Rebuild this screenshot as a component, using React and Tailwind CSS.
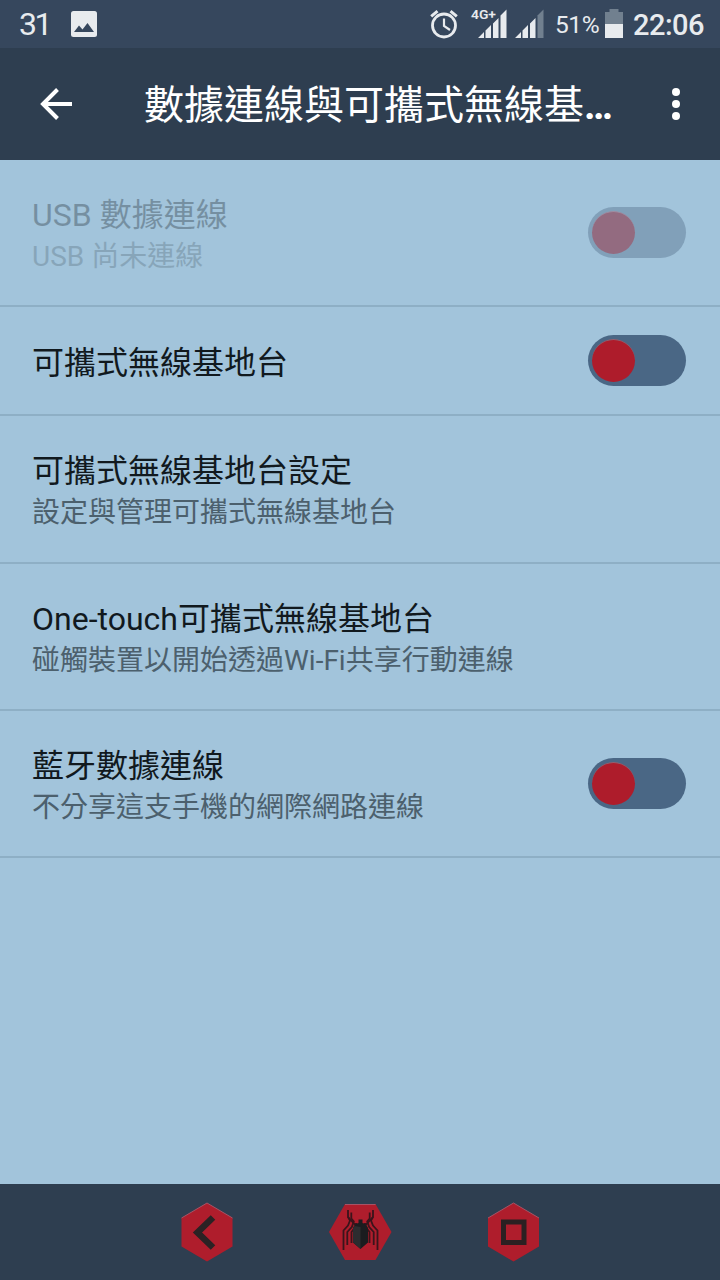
import React from 'react';

const rows = [
    { title: 'USB 數據連線', summary: 'USB 尚未連線', height: 'h-[147px]', hasSwitch: true, disabled: true },
    { title: '可攜式無線基地台', height: 'h-[109px]', hasSwitch: true },
    { title: '可攜式無線基地台設定', summary: '設定與管理可攜式無線基地台', height: 'h-[148px]' },
    { title: 'One-touch可攜式無線基地台', summary: '碰觸裝置以開始透過Wi-Fi共享行動連線', height: 'h-[147px]' },
    { title: '藍牙數據連線', summary: '不分享這支手機的網際網路連線', height: 'h-[147px]', hasSwitch: true },
];

function StatusBar() {
    return (
        <div className="h-12 bg-[#36475d] flex items-center text-[#e8ebee]">
            <span className="ml-[19px] w-[51px] text-[32px] leading-none font-normal tracking-[-2.5px]">31</span>
            <svg className="w-[28px] h-[28px]" viewBox="0 0 28 28">
                <rect x="1" y="1" width="26" height="26" rx="2.5" fill="#e8ebee" />
                <path d="M4 22l5-6.500 3.500 4 5-6.500L24 22z" fill="#36475d" />
            </svg>
            <svg className="ml-[332px] w-[28px] h-[32px]" viewBox="0 0 28 32" fill="none" stroke="#e8ebee">
                <circle cx="14" cy="17.5" r="11.5" strokeWidth="2.8" />
                <path d="M14 10.5v7.5l6 4" strokeWidth="2.2" />
                <path d="M1.2 8.3l6.3-5.2M26.8 8.3l-6.3-5.2" strokeWidth="3" />
            </svg>
            <svg className="ml-[12px] w-[38px] h-[42px]" viewBox="0 -4 38 42" fill="#e8ebee">
                <text x="1" y="11.5" fontSize="13" fontWeight="600" textLength="25" lengthAdjust="spacingAndGlyphs" fontFamily="Roboto, sans-serif">4G+</text>
                <path d="M8 31l6-6v6zM15.500 31v-7.500l5.500-5.500v13zM23 31V16.500l5.500-5.500v20zM30.500 31V8.500l6-6V31z" />
            </svg>
            <svg className="ml-[7px] w-[30px] h-[34px]" viewBox="0 0 30 34" fill="#e8ebee">
                <path d="M0 31l6-6v6zM7.500 31v-7.500l5.500-5.500v13zM15 31V16.500l5.500-5.500v20z" />
                <path d="M22.500 31V8.500l6-6V31z" fill="#71808f" />
            </svg>
            <span className="ml-[10px] w-[50px] text-[24.5px] leading-none tracking-[-0.4px] whitespace-nowrap pt-[2px]">51%</span>
            <svg className="w-[18px] h-[30px]" viewBox="0 0 18 30">
                <path d="M0 3h4.500V0h9v3H18v13H0z" fill="#71808f" />
                <path d="M0 15h18v14H0z" fill="#e8ebee" />
            </svg>
            <span className="ml-[10px] text-[29px] leading-none font-medium tracking-[-0.5px] whitespace-nowrap pt-[2px]">22:06</span>
        </div>
    );
}

function Header() {
    return (
        <div className="h-28 bg-[#2e3e50] flex items-center text-white">
            <svg className="ml-[40px] w-[32px] h-[32px]" viewBox="0 0 32 32" fill="none" stroke="white" strokeWidth="4">
                <path d="M17.5 1.5L3 16l14.5 14.5M2.5 16H32" />
            </svg>
            <h1 className="ml-[72px] w-[480px] pt-[4px] text-[40px] leading-[56px] whitespace-nowrap">
                數據連線與可攜式無線基<span className="font-bold tracking-[-2.7px]">...</span>
            </h1>
            <svg className="ml-[46px] w-[12px] h-[32px]" viewBox="0 0 12 32" fill="white">
                <circle cx="6" cy="4" r="4" />
                <circle cx="6" cy="16" r="4" />
                <circle cx="6" cy="28" r="4" />
            </svg>
        </div>
    );
}

function Switch({ disabled }) {
    return (
        <div className={`w-[98px] h-[51px] rounded-full flex items-center pl-[4px] ${disabled ? 'bg-[#81a0b9]' : 'bg-[#4a6785]'}`}>
            <div className={`w-[43px] h-[43px] rounded-full border-t ${disabled ? 'bg-[#936b80] border-[#a08ca0]' : 'bg-[#ae1c2b] border-[#93606f]'}`} />
        </div>
    );
}

function SpiderLegs() {
    return (
        <>
            <path d="M20 7v7l2 3.500-2 5-4.500 5V47" />
            <path d="M23.300 9.500v6l2.500 3-2 5.500-4.500 5V42" />
            <path d="M20 14l6.500 7h3M29 22l-4 5-1.500 2v11" />
        </>
    );
}

function NavBar() {
    return (
        <div className="h-24 bg-[#2e3e50] flex items-center">
            <svg className="ml-[180px] w-[54px] h-[60px]" viewBox="0 0 54 60">
                <path d="M27 1l25.500 15v28.500L27 59.500 1.500 44.500V16z" fill="#af1d2c" />
                <path d="M1.500 16L27 1l25.500 15" fill="none" stroke="#a65365" />
                <path d="M33 15.500L17.500 30.500 33 45.500" fill="none" stroke="#2b2224" strokeWidth="6.500" />
            </svg>
            <svg className="ml-[94px] w-[64px] h-[58px]" viewBox="0 0 64 58">
                <path d="M17 1h30.500L63.500 29 47.500 57H17L1 29z" fill="#af1d2c" />
                <path d="M17 1.500h30.500" stroke="#a65365" />
                <g fill="none" stroke="#3a141b" strokeWidth="1.800">
                    <SpiderLegs />
                    <g transform="translate(65 0) scale(-1 1)">
                        <SpiderLegs />
                    </g>
                </g>
                <path d="M30.500 16.500h4v3.500l4 2 1.500 3v14.500L32.500 46 25 39.500V25l1.500-3 4-2z" fill="#1b1c1f" />
                <path d="M32.500 24v22L25 39.500V25l1.500-2z" fill="#2c2c2f" />
            </svg>
            <svg className="ml-[94px] w-[54px] h-[60px]" viewBox="0 0 54 60">
                <path d="M27.500 1L53 16v28.500l-25.500 15L2 44.500V16z" fill="#af1d2c" />
                <path d="M2 16L27.500 1 53 16" fill="none" stroke="#a65365" />
                <rect x="17.500" y="20" width="20.500" height="20.500" fill="none" stroke="#2b2022" strokeWidth="5" />
            </svg>
        </div>
    );
}

export default function App() {
    return (
        <div className="w-[720px] h-[1280px] overflow-hidden flex flex-col bg-[#a2c4db] font-[Roboto,'Noto_Sans_CJK_TC',sans-serif]" lang="zh-TW">
            <StatusBar />
            <Header />
            <div className="flex-1">
                {rows.map(row => (
                    <div key={row.title} className={`${row.height} flex items-center pl-[32px] pr-[34px] border-b-2 border-[#8eafc5]`}>
                        <div className={`flex-1 ${row.summary ? 'pt-[6px]' : 'pt-[4px]'}`}>
                            <div className={`text-[32px] leading-[42px] whitespace-nowrap text-[#11191e] ${row.disabled ? 'opacity-30' : ''}`}>{row.title}</div>
                            {row.summary && (
                                <div className={`text-[28px] leading-[42px] whitespace-nowrap text-[#4c606d] ${row.disabled ? 'opacity-30' : ''}`}>{row.summary}</div>
                            )}
                        </div>
                        {row.hasSwitch && <Switch disabled={row.disabled} />}
                    </div>
                ))}
            </div>
            <NavBar />
        </div>
    );
}
